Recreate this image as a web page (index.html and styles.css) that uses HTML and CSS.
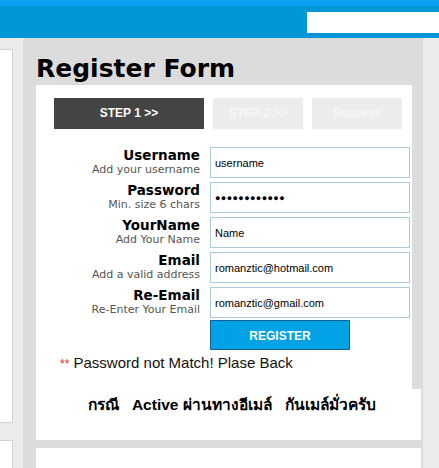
FILE: index.html
```html
<!DOCTYPE html>
<html>
<head>
<meta charset="utf-8">
<link rel="stylesheet" href="styles.css">
</head>
<body>
<header class="topbar">
  <div class="search"></div>
</header>
<div class="layout">
  <aside class="sidebar">
    <div class="side-box side-box-tall"></div>
    <div class="side-box"></div>
  </aside>
  <main class="main">
    <h1 class="title">Register Form</h1>
    <section class="card">
      <div class="steps">
        <div class="step step-active">STEP 1 &gt;&gt;</div>
        <div class="step step-small">STEP 2 &gt;&gt;</div>
        <div class="step step-small">Success</div>
      </div>
      <form class="form">
        <div class="label"><span class="label-main">Username</span><span class="label-sub">Add your username</span></div>
        <div class="field">username</div>
        <div class="label"><span class="label-main">Password</span><span class="label-sub">Min. size 6 chars</span></div>
        <div class="field field-pass">&#9679;&#9679;&#9679;&#9679;&#9679;&#9679;&#9679;&#9679;&#9679;&#9679;&#9679;&#9679;</div>
        <div class="label"><span class="label-main">YourName</span><span class="label-sub">Add Your Name</span></div>
        <div class="field">Name</div>
        <div class="label"><span class="label-main">Email</span><span class="label-sub">Add a valid address</span></div>
        <div class="field">romanztic@hotmail.com</div>
        <div class="label"><span class="label-main">Re-Email</span><span class="label-sub">Re-Enter Your Email</span></div>
        <div class="field">romanztic@gmail.com</div>
        <div></div>
        <div class="btn">REGISTER</div>
      </form>
      <p class="error"><span class="stars">**</span> Password not Match! Plase Back</p>
      <div class="note">กรณี &nbsp; Active ผ่านทางอีเมล์ &nbsp; กันเมล์มั่วครับ</div>
    </section>
    <section class="card card-second"></section>
  </main>
</div>
</body>
</html>
```
FILE: styles.css
```css
html, body {
  margin: 0;
  padding: 0;
}
body {
  background: #ebebeb;
  width: 439px;
  height: 468px;
  overflow: hidden;
  font-family: "DejaVu Sans", sans-serif;
}
.topbar {
  border-top: 6px solid #0d9df2;
  background: #0096d8;
  display: flex;
  box-sizing: border-box;
  padding-top: 6px;
  padding-left: 307px;
  height: 38px;
}
.search {
  background: #fff;
  width: 132px;
  height: 21px;
}
.layout {
  display: flex;
  height: 430px;
  overflow: hidden;
}
.sidebar {
  width: 13px;
  padding-top: 11px;
  display: flex;
  flex-direction: column;
  gap: 17px;
}
.side-box {
  background: #fff;
  border-right: 1px solid #d2d2d2;
  border-top: 1px solid #d2d2d2;
  border-bottom: 1px solid #d2d2d2;
  height: 60px;
  width: 12px;
  flex: none;
}
.side-box-tall {
  height: 372px;
}
.main {
  margin-left: 10px;
  width: 376px;
  background: #dcdcdc;
  padding: 0 11px 0 13px;
  overflow: hidden;
}
.title {
  margin: 0;
  padding-top: 14px;
  font-size: 25px;
  line-height: 33px;
  font-weight: bold;
  color: #000;
}
.card {
  background: #fff;
  width: 358px;
  padding: 13px 0 0 18px;
}
.steps {
  display: flex;
  gap: 9px;
}
.step {
  height: 31px;
  line-height: 31px;
  text-align: center;
  font-family: "Liberation Sans", sans-serif;
  font-weight: bold;
  font-size: 12px;
  background: #ececec;
  color: #f7f7f7;
}
.step-active {
  width: 150px;
  background: #444;
  color: #fff;
}
.step-small {
  width: 90px;
}
.form {
  margin: 18px 0 0 -18px;
  display: grid;
  grid-template-columns: 164px 200px;
  grid-auto-rows: 35px;
  column-gap: 10px;
}
.label {
  display: flex;
  flex-direction: column;
  align-items: flex-end;
  text-align: right;
}
.label-main {
  font-weight: bold;
  font-size: 13.5px;
  line-height: 16px;
  color: #000;
}
.label-sub {
  font-size: 11px;
  line-height: 17px;
  color: #555;
  margin-top: -2px;
}
.field {
  box-sizing: border-box;
  height: 31px;
  border: 1px solid #abcadb;
  padding-left: 4px;
  line-height: 30px;
  font-family: "Liberation Sans", sans-serif;
  font-size: 11px;
  color: #000;
}
.field-pass {
  font-size: 9px;
  letter-spacing: 0.4px;
}
.btn {
  box-sizing: border-box;
  width: 140px;
  height: 30px;
  margin-top: -2px;
  background: #00a2e6;
  border: 1px solid #145f95;
  color: #fff;
  text-align: center;
  line-height: 30px;
  font-family: "Liberation Sans", sans-serif;
  font-weight: bold;
  font-size: 12px;
}
.error {
  margin: -3px 0 0 6px;
  font-family: "Liberation Sans", sans-serif;
  font-size: 15px;
  line-height: 18px;
  color: #111;
}
.stars {
  color: #e8222a;
  font-size: 12px;
}
.note {
  margin: 16px -9px -11px 34px;
  background: #fff;
  height: 51px;
  box-sizing: border-box;
  padding-top: 6px;
  font-family: "Liberation Sans", "Noto Sans", sans-serif;
  font-weight: bold;
  font-size: 15.5px;
  line-height: 20px;
  color: #000;
}
.card-second {
  margin-top: 19px;
  width: 367px;
  height: 60px;
}
```
